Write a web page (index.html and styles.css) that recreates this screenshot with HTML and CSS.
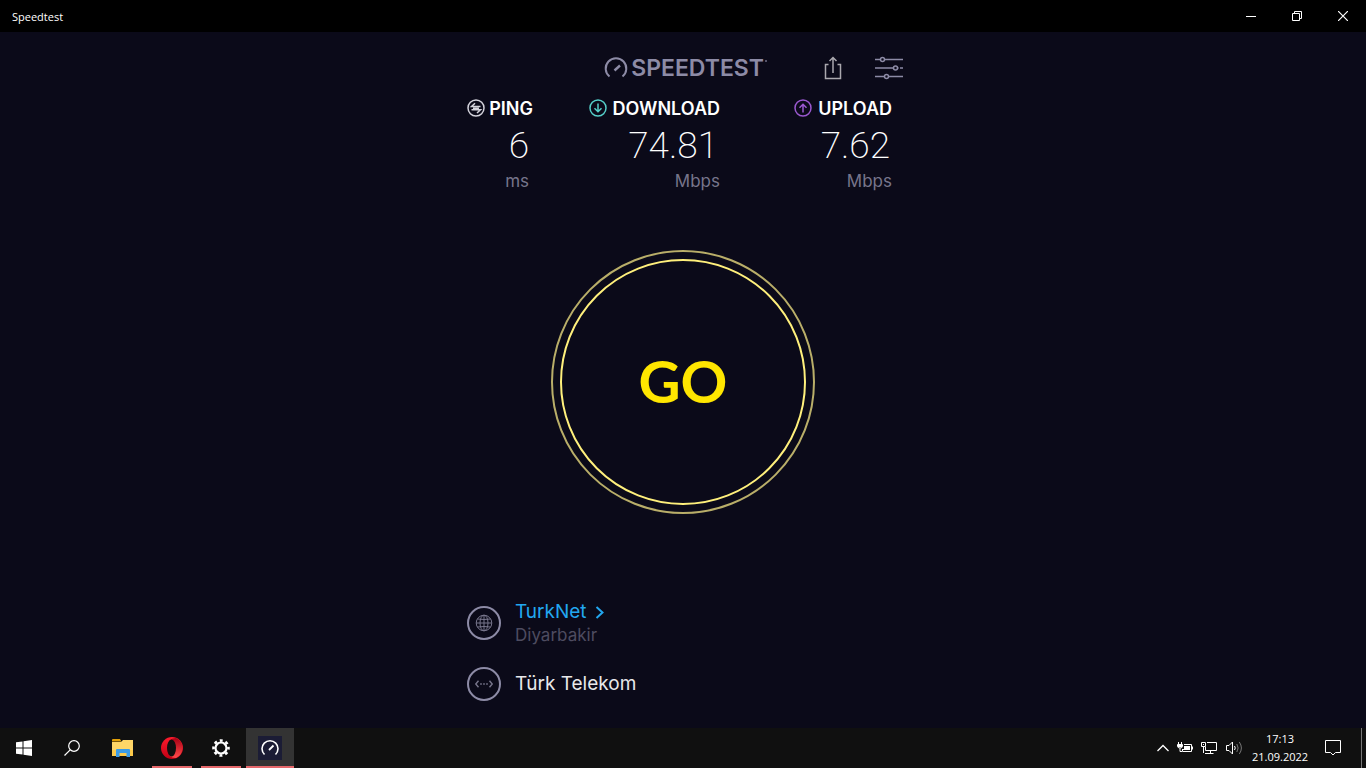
FILE: index.html
```
<!DOCTYPE html>
<html lang="en">
<head>
  <meta charset="UTF-8">
  <meta name="viewport" content="width=device-width, initial-scale=1.0">
  <title>Speedtest</title>
  <link rel="stylesheet" href="styles.css">
</head>
<body>
  <header class="titlebar">
    <span class="window-title">Speedtest</span>
    <div class="window-buttons">
      <button aria-label="Minimize">
        <svg width="10" height="10" viewBox="0 0 10 10"><path d="M0 5.5H10"/></svg>
      </button>
      <button aria-label="Restore">
        <svg width="10" height="10" viewBox="0 0 10 10"><path d="M.5 2.5h7v7h-7zM2.5 2.5v-2h7v7h-2"/></svg>
      </button>
      <button aria-label="Close">
        <svg width="10" height="10" viewBox="0 0 10 10"><path d="M0 0L10 10M10 0L0 10" stroke-width="1.2"/></svg>
      </button>
    </div>
  </header>

  <main>
    <div class="toolbar">
      <div class="logo">
        <svg width="24" height="22" viewBox="0 0 24 22">
          <path d="M5.500 19.500A10.300 10.300 0 1 1 18.500 19.500" stroke-width="2"/>
          <path d="M10.500 13.500L16 8.500" stroke-width="2.400"/>
        </svg>
        <span class="logo-text">SPEEDTEST</span>
        <svg class="mark" width="2" height="16" viewBox="0 0 2 16"><circle cx="1" cy="1" r=".5"/></svg>
      </div>
      <button class="share" aria-label="Share">
        <svg width="18" height="24" viewBox="0 0 18 24"><path d="M4.500 8.500H1.500V22.500H16.500V8.500H13.500M9 17V2M5.500 5L9 1.500L12.500 5"/></svg>
      </button>
      <button class="settings" aria-label="Settings">
        <svg width="28" height="24" viewBox="0 0 28 24">
          <path d="M0 3.500H5.500M9.500 3.500H28M0 12H18M22 12H23.500M25 12H28M0 20.500H9.500M13.500 20.500H28"/>
          <circle cx="7.500" cy="3.500" r="2"/>
          <circle cx="20.500" cy="12" r="2"/>
          <circle cx="11.500" cy="20.500" r="2"/>
        </svg>
      </button>
    </div>

    <section class="results">
      <div class="result ping">
        <h2>
          <svg width="18" height="18" viewBox="0 0 18 18">
            <circle cx="9" cy="9" r="8"/>
            <path d="M13.500 7.500H4.500L8 4.200M6 9.200H12M4.500 10.800H13.500L10 14"/>
          </svg>
          PING
        </h2>
        <div class="value">6</div>
        <div class="unit">ms</div>
      </div>
      <div class="result download">
        <h2>
          <svg width="18" height="18" viewBox="0 0 18 18">
            <circle cx="9" cy="9" r="8"/>
            <path d="M9 4.500V12.500M5.500 9.200L9 12.700L12.500 9.200"/>
          </svg>
          DOWNLOAD
        </h2>
        <div class="value">74.81</div>
        <div class="unit">Mbps</div>
      </div>
      <div class="result upload">
        <h2>
          <svg width="18" height="18" viewBox="0 0 18 18">
            <circle cx="9" cy="9" r="8"/>
            <path d="M9 13.500V5.500M5.500 8.800L9 5.300L12.500 8.800"/>
          </svg>
          UPLOAD
        </h2>
        <div class="value">7.62</div>
        <div class="unit">Mbps</div>
      </div>
    </section>

    <button class="go"><span>GO</span></button>

    <section class="servers">
      <div class="server">
        <svg width="34" height="34" viewBox="0 0 34 34">
          <circle class="ring" cx="17" cy="17" r="16"/>
          <circle cx="17" cy="17" r="7.800"/>
          <ellipse cx="17" cy="17" rx="4" ry="7.800"/>
          <path d="M17 9V25M9 17H25M10.500 13Q17 14 23.500 13M10.500 21Q17 20 23.500 21"/>
        </svg>
        <div>
          <a href="#">TurkNet
            <svg width="9" height="13" viewBox="0 0 9 13"><path d="M1.500 1L7.500 6.500L1.500 12"/></svg>
          </a>
          <div class="city">Diyarbakir</div>
        </div>
      </div>
      <div class="server">
        <svg width="34" height="34" viewBox="0 0 34 34">
          <circle class="ring" cx="17" cy="17" r="16"/>
          <path d="M11.500 13.800L8.800 17L11.500 20.200M22.500 13.800L25.200 17L22.500 20.200M13.200 17h1.600M16.200 17h1.600M19.200 17h1.600" stroke-width="1.400"/>
        </svg>
        <div class="provider">Türk Telekom</div>
      </div>
    </section>
  </main>

  <footer class="taskbar">
    <button aria-label="Start">
      <svg width="16" height="16" viewBox="0 0 16 16" fill="#fff"><path d="M0 2.300L6.500 1.400V7.500H0zM7.500 1.200L16 0V7.500H7.500zM0 8.500H6.500V14.600L0 13.700zM7.500 8.500H16V16L7.500 14.800z"/></svg>
    </button>
    <button aria-label="Search">
      <svg width="16" height="16" viewBox="0 0 16 16" fill="none" stroke="#fff" stroke-width="1.200"><circle cx="10" cy="6" r="5.300"/><path d="M6.200 9.800L.5 15.500"/></svg>
    </button>
    <nav class="tasks">
      <button aria-label="File Explorer">
        <svg width="22" height="18" viewBox="0 0 22 18">
          <path d="M0 1Q0 0 1 0H8L9.500 2.500H0z" fill="#e2a008"/>
          <path d="M0 3H9L11 1H21V16H0z" fill="#ffd667"/>
          <path d="M0 11H21V17H0z" fill="#fcc94a"/>
          <path d="M4 11Q4 10 5 10H17Q18 10 18 11V18H14.500V14H7.500V18H4z" fill="#3c9be4"/>
        </svg>
      </button>
      <button class="open" aria-label="Opera">
        <svg width="22" height="22" viewBox="0 0 22 22">
          <defs>
            <linearGradient id="operaLeft" x1="0" y1="0" x2="0" y2="1"><stop offset="0" stop-color="#ff1b2d"/><stop offset="1" stop-color="#c00014"/></linearGradient>
            <linearGradient id="operaRight" x1="0" y1="0" x2="0" y2="1"><stop offset="0" stop-color="#a70014"/><stop offset="1" stop-color="#ff4b4b"/></linearGradient>
          </defs>
          <circle cx="11" cy="11" r="11" fill="url(#operaLeft)"/>
          <path d="M8 3.500Q11 1 15 1A11 11 0 0 1 15 21Q11 21 8 18.500Z" fill="url(#operaRight)"/>
          <ellipse cx="10.500" cy="11" rx="4.500" ry="8.600" fill="#101010"/>
        </svg>
      </button>
      <button class="open" aria-label="Settings">
        <svg width="18" height="18" viewBox="0 0 18 18" fill="none" stroke="#fff">
          <circle cx="9" cy="9" r="5.500" stroke-width="2.200"/>
          <circle cx="9" cy="9" r="7.500" stroke-width="2.600" stroke-dasharray="2.900 2.990" stroke-dashoffset="1.450"/>
        </svg>
      </button>
      <button class="open active" aria-label="Speedtest">
        <svg width="24" height="24" viewBox="0 0 24 24" fill="none" stroke="#fff">
          <path d="M0 0H24V24H0z" fill="#1b1c35" stroke="none"/>
          <path d="M6.500 18.500A8 8 0 1 1 17.500 18.500" stroke-width="1.600"/>
          <path d="M11 14L15.500 9.500" stroke-width="1.800"/>
        </svg>
      </button>
    </nav>
    <div class="tray">
      <svg width="12" height="8" viewBox="0 0 12 8"><path d="M.5 7L6 1.500L11.500 7" stroke-width="1.300"/></svg>
      <svg width="16" height="12" viewBox="0 0 16 12">
        <path d="M1.500 0V2M4.500 0V2M.5 2.500H5.500V4Q5.500 6 3 6Q.5 6 .5 4zM3 6V9.500H5M7 2.500H14.500V9.500H5.500V7"/>
        <path d="M1 3H5V5H1zM7 4H13V8H6V7H7z" fill="#fff" stroke="none"/><path d="M15.500 4.500V7.500"/>
      </svg>
      <svg width="17" height="14" viewBox="0 0 17 14">
        <path d="M6 1.500H15.500V9.500H4.500V6M9.500 9.500V12.500M4 12.500H12.500M.5 1.500H4.500V5.500H.5zM2 3.500H3M2.500 5.500V12"/>
      </svg>
      <svg width="17" height="14" viewBox="0 0 17 14">
        <path d="M.5 4.500H3L6.500 1V13L3 9.500H.5zM8.500 5Q10 7 8.500 9"/>
        <path d="M10.800 3Q13.500 7 10.800 11M13.300 1Q17.500 7 13.300 13" stroke="#777"/>
      </svg>
    </div>
    <div class="clock">
      <div>17:13</div>
      <div>21.09.2022</div>
    </div>
    <button class="notifications" aria-label="Notifications">
      <svg width="16" height="16" viewBox="0 0 16 16" fill="none" stroke="#fff"><path d="M.5 .5H15.500V12.500H10.500L8 15L5.500 12.500H.5z"/></svg>
    </button>
  </footer>
</body>
</html>
```

FILE: styles.css
```
* {
  box-sizing: border-box;
}
body {
  margin: 0;
  min-height: 100vh;
  display: flex;
  flex-direction: column;
  background-color: #0b0a19;
  color: #fff;
  font-family: Inter, sans-serif;
}
button {
  padding: 0;
  border: none;
  background: none;
  color: inherit;
  font-family: inherit;
  cursor: pointer;
}
svg {
  flex: none;
}

/* window title bar */
.titlebar {
  display: flex;
  justify-content: space-between;
  align-items: center;
  height: 32px;
  padding-left: 12px;
  background-color: #000;
  font-family: "Open Sans", sans-serif;
  font-size: 11px;
}
.window-buttons {
  display: flex;
}
.window-buttons button {
  display: flex;
  align-items: center;
  justify-content: center;
  width: 46px;
  height: 32px;
}
.window-buttons svg {
  fill: none;
  stroke: #fff;
}

main {
  flex: 1;
  display: flex;
  flex-direction: column;
  width: 100%;
  max-width: 440px;
  margin: 0 auto;
  padding: 24px 0 27px;
}

/* logo and tools */
.toolbar {
  display: flex;
  justify-content: flex-end;
  align-items: center;
  height: 24px;
}
.toolbar svg {
  display: block;
  fill: none;
}
.logo {
  display: flex;
  align-items: center;
  gap: 3px;
  color: #8d8ba6;
}
.logo svg {
  stroke: #8d8ba6;
}
.logo .mark {
  margin-left: -2px;
}
.logo-text {
  font-size: 23px;
  font-weight: 600;
}
.share {
  margin-left: 57px;
}
.share svg {
  stroke: #aaa8ae;
  stroke-width: 1.5;
}
.settings {
  margin-left: 33px;
}
.settings svg {
  stroke: #8d8ba6;
  stroke-width: 1.5;
}

/* results */
.results {
  display: grid;
  grid-template-columns: 70px 187px 172px;
  margin-top: 16px;
  text-align: right;
}
.result h2 {
  display: flex;
  align-items: center;
  justify-content: flex-end;
  gap: 6px;
  height: 24px;
  margin: 0;
  font-size: 18px;
  font-weight: 600;
  white-space: nowrap;
}
.ping h2 {
  gap: 4px;
}
.result svg {
  fill: none;
  stroke-width: 1.5;
}
.ping svg {
  stroke: #d4d3dc;
}
.download svg {
  stroke: #55cfc9;
}
.upload svg {
  stroke: #9b59d0;
}
.value {
  padding-right: 2px;
  font-family: Roboto, sans-serif;
  font-size: 37px;
  font-weight: 200;
  line-height: 52px;
}
.unit {
  color: #77758b;
  font-size: 17px;
  line-height: 18px;
}
.ping .value,
.ping .unit {
  padding-right: 4px;
}

/* start button */
.go {
  align-self: center;
  width: 264px;
  height: 264px;
  margin-top: 60px;
  padding: 7px;
  border: 2px solid #b9ae69;
  border-radius: 50%;
}
.go span {
  display: flex;
  align-items: center;
  justify-content: center;
  height: 100%;
  padding-bottom: 4px;
  border: 2px solid #fff07c;
  border-radius: 50%;
  color: #ffe600;
  font-family: Lato, sans-serif;
  font-size: 58px;
  font-weight: 700;
}

/* server and provider */
.servers {
  display: flex;
  flex-direction: column;
  gap: 21px;
  margin-top: auto;
  padding-left: 4px;
}
.server {
  display: flex;
  align-items: center;
  gap: 14px;
  font-size: 19px;
  line-height: 24px;
}
.server svg {
  fill: none;
  stroke: #77758b;
}
.server .ring {
  stroke: #8d8ba6;
  stroke-width: 2;
}
.server a {
  display: flex;
  align-items: center;
  gap: 8px;
  color: #22a7f0;
  text-decoration: none;
}
.server a svg {
  stroke: #22a7f0;
  stroke-width: 2;
}
.city {
  color: #4e4c60;
  font-size: 17px;
  line-height: 22px;
}
.provider {
  color: #e8e8ea;
}

/* windows taskbar */
.taskbar {
  display: flex;
  height: 40px;
  background-color: #101010;
  font-family: "Open Sans", sans-serif;
}
.taskbar button {
  display: flex;
  align-items: center;
  justify-content: center;
  width: 48px;
  height: 40px;
}
.tasks {
  display: flex;
  gap: 1px;
  margin-left: 3px;
}
.taskbar .open {
  background: linear-gradient(#e5686b, #e5686b) bottom / 40px 2px no-repeat;
}
.taskbar .active {
  background-color: #333;
  background-size: 48px 2px;
}
.tray {
  display: flex;
  align-items: center;
  gap: 8px;
  margin-left: auto;
}
.tray svg {
  fill: none;
  stroke: #fff;
}
.clock {
  width: 74px;
  padding-top: 2px;
  font-size: 11px;
  line-height: 18px;
  text-align: center;
}
.taskbar .notifications {
  width: 45px;
  margin-right: 4px;
  padding-right: 12px;
  border-right: 1px solid #777;
}
```
